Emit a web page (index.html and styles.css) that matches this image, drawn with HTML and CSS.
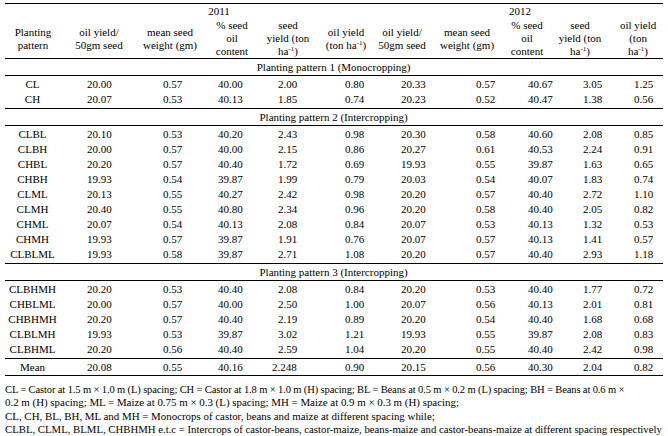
FILE: index.html
```html
<!DOCTYPE html>
<html>
<head>
<meta charset="utf-8">
<link rel="stylesheet" href="styles.css">
</head>
<body>
<div class="page">
<table class="data">
  <colgroup>
    <col class="w1"><col class="w2"><col class="w3"><col class="w4"><col class="w5"><col class="w6"><col class="w7"><col class="w8"><col class="w9"><col class="w10"><col class="w11">
  </colgroup>
  <thead>
    <tr class="year-row">
      <th></th>
      <th colspan="5">2011</th>
      <th colspan="5">2012</th>
    </tr>
    <tr class="head-row">
      <th>Planting<br>pattern</th>
      <th>oil yield/<br>50gm seed</th>
      <th>mean seed<br>weight (gm)</th>
      <th>% seed<br>oil<br>content</th>
      <th>seed<br>yield (ton<br>ha<sup>-1</sup>)</th>
      <th>oil yield<br>(ton ha<sup>-1</sup>)</th>
      <th>oil yield/<br>50gm seed</th>
      <th>mean seed<br>weight (gm)</th>
      <th>% seed<br>oil<br>content</th>
      <th>seed<br>yield (ton<br>ha<sup>-1</sup>)</th>
      <th>oil yield<br>(ton<br>ha<sup>-1</sup>)</th>
    </tr>
  </thead>
  <tbody>
    <tr class="label-row"><td colspan="11">Planting pattern 1 (Monocropping)</td></tr>
    <tr class="first"><td>CL</td><td>20.00</td><td>0.57</td><td>40.00</td><td>2.00</td><td>0.80</td><td>20.33</td><td>0.57</td><td>40.67</td><td>3.05</td><td>1.25</td></tr>
    <tr class="last"><td>CH</td><td>20.07</td><td>0.53</td><td>40.13</td><td>1.85</td><td>0.74</td><td>20.23</td><td>0.52</td><td>40.47</td><td>1.38</td><td>0.56</td></tr>

    <tr class="label-row"><td colspan="11">Planting pattern 2 (Intercropping)</td></tr>
    <tr class="first"><td>CLBL</td><td>20.10</td><td>0.53</td><td>40.20</td><td>2.43</td><td>0.98</td><td>20.30</td><td>0.58</td><td>40.60</td><td>2.08</td><td>0.85</td></tr>
    <tr><td>CLBH</td><td>20.00</td><td>0.57</td><td>40.00</td><td>2.15</td><td>0.86</td><td>20.27</td><td>0.61</td><td>40.53</td><td>2.24</td><td>0.91</td></tr>
    <tr><td>CHBL</td><td>20.20</td><td>0.57</td><td>40.40</td><td>1.72</td><td>0.69</td><td>19.93</td><td>0.55</td><td>39.87</td><td>1.63</td><td>0.65</td></tr>
    <tr><td>CHBH</td><td>19.93</td><td>0.54</td><td>39.87</td><td>1.99</td><td>0.79</td><td>20.03</td><td>0.54</td><td>40.07</td><td>1.83</td><td>0.74</td></tr>
    <tr><td>CLML</td><td>20.13</td><td>0.55</td><td>40.27</td><td>2.42</td><td>0.98</td><td>20.20</td><td>0.57</td><td>40.40</td><td>2.72</td><td>1.10</td></tr>
    <tr><td>CLMH</td><td>20.40</td><td>0.55</td><td>40.80</td><td>2.34</td><td>0.96</td><td>20.20</td><td>0.58</td><td>40.40</td><td>2.05</td><td>0.82</td></tr>
    <tr><td>CHML</td><td>20.07</td><td>0.54</td><td>40.13</td><td>2.08</td><td>0.84</td><td>20.07</td><td>0.53</td><td>40.13</td><td>1.32</td><td>0.53</td></tr>
    <tr><td>CHMH</td><td>19.93</td><td>0.57</td><td>39.87</td><td>1.91</td><td>0.76</td><td>20.07</td><td>0.57</td><td>40.13</td><td>1.41</td><td>0.57</td></tr>
    <tr class="last"><td>CLBLML</td><td>19.93</td><td>0.58</td><td>39.87</td><td>2.71</td><td>1.08</td><td>20.20</td><td>0.57</td><td>40.40</td><td>2.93</td><td>1.18</td></tr>

    <tr class="label-row"><td colspan="11">Planting pattern 3 (Intercropping)</td></tr>
    <tr class="first"><td>CLBHMH</td><td>20.20</td><td>0.53</td><td>40.40</td><td>2.08</td><td>0.84</td><td>20.20</td><td>0.53</td><td>40.40</td><td>1.77</td><td>0.72</td></tr>
    <tr><td>CHBLML</td><td>20.00</td><td>0.57</td><td>40.00</td><td>2.50</td><td>1.00</td><td>20.07</td><td>0.56</td><td>40.13</td><td>2.01</td><td>0.81</td></tr>
    <tr><td>CHBHMH</td><td>20.20</td><td>0.57</td><td>40.40</td><td>2.19</td><td>0.89</td><td>20.20</td><td>0.54</td><td>40.40</td><td>1.68</td><td>0.68</td></tr>
    <tr><td>CLBLMH</td><td>19.93</td><td>0.53</td><td>39.87</td><td>3.02</td><td>1.21</td><td>19.93</td><td>0.55</td><td>39.87</td><td>2.08</td><td>0.83</td></tr>
    <tr class="last"><td>CLBHML</td><td>20.20</td><td>0.56</td><td>40.40</td><td>2.59</td><td>1.04</td><td>20.20</td><td>0.55</td><td>40.40</td><td>2.42</td><td>0.98</td></tr>

    <tr class="mean-row"><td>Mean</td><td>20.08</td><td>0.55</td><td>40.16</td><td class="wide">2.248</td><td>0.90</td><td>20.15</td><td>0.56</td><td>40.30</td><td>2.04</td><td>0.82</td></tr>
  </tbody>
</table>
<div class="notes">
  <p class="n1">CL = Castor at 1.5 m × 1.0 m (L) spacing; CH = Castor at 1.8 m × 1.0 m (H) spacing; BL = Beans at 0.5 m × 0.2 m (L) spacing; BH = Beans at 0.6 m ×</p>
  <p class="n2">0.2 m (H) spacing; ML = Maize at 0.75 m × 0.3 (L) spacing; MH = Maize at 0.9 m × 0.3 m (H) spacing;</p>
  <p class="n2">CL, CH, BL, BH, ML and MH = Monocrops of castor, beans and maize at different spacing while;</p>
  <p class="n4">CLBL, CLML, BLML, CHBHMH e.t.c = Intercrops of castor-beans, castor-maize, beans-maize and castor-beans-maize at different spacing respectively</p>
</div>
</div>
</body>
</html>
```

FILE: styles.css
```css
html, body {
  margin: 0;
  padding: 0;
  background: #ffffff;
}

.page {
  padding: 3px 5px 0 5px;
  font-family: "Liberation Serif", "Times New Roman", serif;
  font-size: 11px;
  line-height: 13px;
  color: #000000;
}

.data {
  width: 658px;
  border-collapse: collapse;
  table-layout: fixed;
}

.w1 { width: 56px; }
.w2 { width: 76px; }
.w3 { width: 66px; }
.w4 { width: 58px; }
.w5 { width: 54px; }
.w6 { width: 62px; }
.w7 { width: 50px; }
.w8 { width: 80px; }
.w9 { width: 40px; }
.w10 { width: 66px; }
.w11 { width: 50px; }

.data th {
  font-weight: normal;
  text-align: center;
  vertical-align: middle;
  padding: 0;
  white-space: nowrap;
}

.data sup {
  font-size: 7px;
  line-height: 0;
  vertical-align: 4px;
}

.year-row {
  border-top: 1px solid #000;
}

.year-row th {
  padding: 1px 0 1px 0;
}

.data td {
  padding-top: 1px;
  padding-bottom: 1px;
  text-align: left;
  white-space: nowrap;
  vertical-align: middle;
}

.data td:first-child {
  text-align: center;
  padding-left: 0;
}

.data td:nth-child(2) { padding-left: 26px; }
.data td:nth-child(3) { padding-left: 26px; }
.data td:nth-child(4) { padding-left: 15px; }
.data td:nth-child(5) { padding-left: 17px; }
.data td:nth-child(6) { padding-left: 30px; }
.data td:nth-child(7) { padding-left: 24px; }
.data td:nth-child(8) { padding-left: 49px; }
.data td:nth-child(9) { padding-left: 21px; }
.data td:nth-child(10) { padding-left: 36px; }
.data td:nth-child(11) { padding-left: 21px; }

.data td.wide { padding-left: 11px; }

.label-row {
  border-top: 1px solid #000;
  border-bottom: 1px solid #000;
}

.data .label-row td {
  text-align: center;
  padding-top: 2px;
  padding-bottom: 1px;
}

.data tr.first td { padding-top: 2px; }
.data tr.last td { padding-bottom: 2px; }

.mean-row {
  border-top: 1px solid #000;
  border-bottom: 1px solid #000;
}

.data .mean-row td {
  padding-top: 2px;
  padding-bottom: 1px;
}

.notes {
  margin-top: 7px;
}

.notes p {
  margin: 0;
  white-space: nowrap;
  line-height: 13.4px;
}

.notes .n1 {
  font-size: 10.5px;
  letter-spacing: -0.12px;
}

.notes .n2 {
  font-size: 10.9px;
}

.notes .n4 {
  font-size: 10.75px;
}
```
